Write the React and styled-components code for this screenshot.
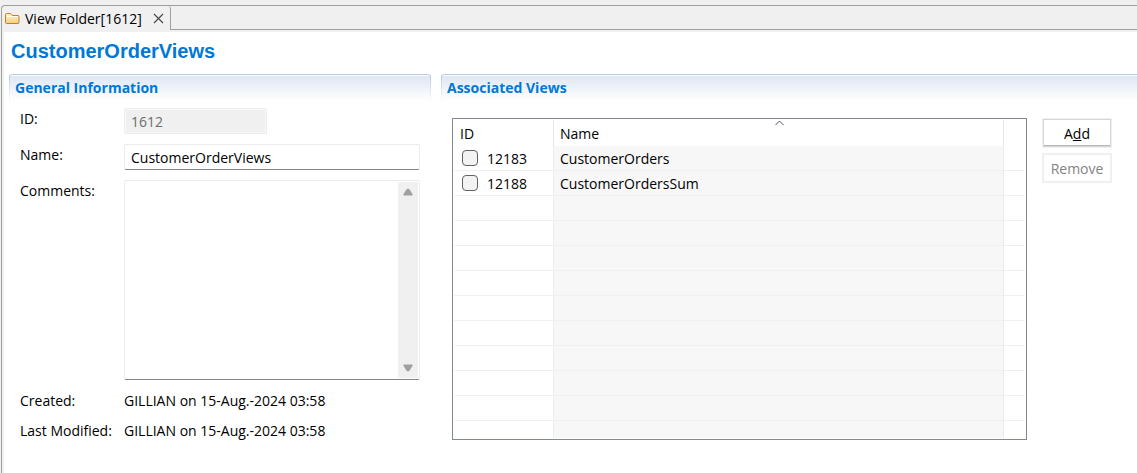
import React from "react";
import styled, { createGlobalStyle } from "styled-components";

const GlobalStyle = createGlobalStyle`
  * { box-sizing: border-box; }
  body {
    margin: 0;
    background: #f0f0f0;
    color: #000;
    font-family: "Open Sans", "Noto Sans", sans-serif;
    font-size: 14px;
    line-height: 20px;
  }
  input, textarea, button { font: inherit; color: inherit; }
`;

const Editor = styled.div`
  display: flex;
  flex-direction: column;
  min-height: 100vh;
  padding: 5px 0 0 1px;
`;

const Frame = styled.div`
  flex: 1;
  display: flex;
  flex-direction: column;
  border: solid #a0a0a0;
  border-width: 1px 0 0 1px;
  border-top-left-radius: 4px;
`;

const TabBar = styled.div`
  display: flex;
  height: 24px;
`;

const Tab = styled.div`
  display: flex;
  align-items: center;
  width: 169px;
  padding-left: 3px;
  border-right: 1px solid #a0a0a0;
  border-top-right-radius: 3px;
  white-space: nowrap;
`;

const TabLabel = styled.span`
  flex: 1;
  padding: 2px 0 0 5px;
`;

const TabFill = styled.div`
  flex: 1;
  border-bottom: 1px solid #a0a0a0;
`;

const CloseButton = styled.button`
  display: flex;
  padding: 0;
  margin-right: 6px;
  border: 0;
  background: none;
`;

const Page = styled.main`
  flex: 1;
  margin: 2px 0 0 2px;
  padding: 6px 0 16px 5px;
  background: #fff;
`;

const Title = styled.h1`
  margin: 0;
  padding-left: 2px;
  color: #0078d7;
  font: bold 20px/26px "Liberation Sans", Arial, sans-serif;
`;

const Columns = styled.div`
  display: grid;
  grid-template-columns: minmax(0, 422fr) minmax(0, 696fr);
  column-gap: 10px;
  padding-top: 10px;
`;

const SectionHeader = styled.h2`
  position: relative;
  margin: 0;
  height: 28px;
  padding: 3px 6px;
  border-top: 1px solid #b4c8e0;
  border-radius: ${(p) => (p.$open ? "4px 0 0 0" : "4px 4px 0 0")};
  background: linear-gradient(#fff 0 1px, #e0e7f2 1px, #fff 26px);
  color: #0078d7;
  font-size: 14px;
  font-weight: bold;
  line-height: 19px;

  &::after {
    content: "";
    position: absolute;
    inset: 0;
    border: solid transparent;
    border-width: 0 1px;
    border-image: linear-gradient(#b4c8e0, #fff) 1;
    border-right-width: ${(p) => (p.$open ? 0 : "1px")};
    border-top-width: 0;
    border-bottom-width: 0;
  }
`;

const Form = styled.form`
  display: grid;
  grid-template-columns: 104px minmax(0, 1fr);
  row-gap: 10px;
  padding: 6px 11px 0 11px;
`;

const Label = styled.label`
  height: 22px;
  padding-top: 1px;
  white-space: nowrap;
`;

const TextField = styled.input`
  width: ${(p) => (p.$short ? "143px" : "100%")};
  height: 26px;
  padding: 1px 6px;
  border: 1px solid #ececec;
  border-bottom-color: #868686;
  border-radius: 2px;
  background: #fff;
  outline: 0;

  &:disabled {
    border-color: #ececec;
    background: #f0f0f0;
    box-shadow: inset 0 0 0 1px #f9f9f9;
    color: #6d6d6d;
  }
`;

const CommentBox = styled.div`
  display: flex;
  height: 200px;
  padding: 1px;
  border: 1px solid #ececec;
  border-bottom-color: #868686;
  border-radius: 2px;
`;

const CommentArea = styled.textarea`
  flex: 1;
  min-width: 0;
  padding: 2px 5px;
  border: 0;
  outline: 0;
  resize: none;
  overflow: hidden;
  background: #fff;
`;

const ScrollTrack = styled.div`
  display: flex;
  flex-direction: column;
  justify-content: space-between;
  align-items: center;
  width: 20px;
  padding: 6px 0;
  background: #f0f0f0;
`;

const Details = styled.dl`
  display: grid;
  grid-template-columns: 104px minmax(0, 1fr);
  row-gap: 10px;
  margin: 0;
  padding: 11px 0 0 11px;
  white-space: nowrap;

  dt, dd { margin: 0; }
`;

const ViewsBody = styled.div`
  display: flex;
  align-items: flex-start;
  gap: 15px;
  padding: 16px 25px 0 11px;
`;

const TableBox = styled.div`
  flex: 1;
  min-width: 0;
  height: 322px;
  padding: 1px;
  border: 1px solid #828790;
  overflow: hidden;
`;

const TableClip = styled.div`
  height: 100%;
  overflow: hidden;
`;

const Table = styled.table`
  width: 100%;
  table-layout: fixed;
  border-collapse: separate;
  border-spacing: 0;
`;

const HeadCell = styled.th`
  position: relative;
  width: ${(p) => p.$width || "auto"};
  height: 26px;
  padding: 2px 6px 0;
  border-right: ${(p) => (p.$last ? "0" : "1px solid #e5e5e5")};
  font-weight: normal;
  text-align: left;
`;

const SortMark = styled.svg`
  position: absolute;
  top: 0;
  left: calc(50% - 4px);
`;

const Cell = styled.td`
  height: 25px;
  padding: 2px 6px 0;
  border-bottom: 1px solid #f0f0f0;
  border-right: ${(p) => (p.$last ? "0" : "1px solid #e8edf4")};
  background: ${(p) => (p.$sorted ? "#f7f7f7" : "#fff")};
`;

const CheckLabel = styled.label`
  display: flex;
  align-items: center;
  gap: 9px;
  padding-left: 2px;
`;

const CheckBox = styled.input`
  appearance: none;
  width: 16px;
  height: 16px;
  margin: 0 0 2px;
  border: 1px solid #626262;
  border-radius: 4px;
  background: #f3f3f3;
`;

const Actions = styled.div`
  display: flex;
  flex-direction: column;
  gap: 5px;
  width: 70px;
`;

const ActionButton = styled.button`
  height: 30px;
  padding: 1px 0 0;
  border: 1px solid #f0f0f0;
  background: #fff;
  box-shadow: inset 0 0 0 1px #d6d6d6, inset 0 -2px 0 #b8b8b8;

  &:disabled {
    color: #838383;
    box-shadow: inset 0 0 0 1px #f0f0f0;
  }
`;

const FolderIcon = () => (
  <svg width="15" height="13" viewBox="0 0 15 13" aria-hidden="true">
    <defs>
      <linearGradient id="folder" x1="0" y1="0" x2="0" y2="1">
        <stop offset="0" stopColor="#fff3cf" />
        <stop offset="1" stopColor="#f5cf7c" />
      </linearGradient>
    </defs>
    <path
      d="M.5 10.5v-8q0-1 1-1h3.500q1 0 1.500 1t1.500 1h5q1 0 1 1v6q0 1-1 1h-11.500q-1 0-1-1z"
      fill="url(#folder)"
      stroke="#c08030"
    />
    <path d="M1.500 4.500h11.500" stroke="#fffbe8" />
  </svg>
);

const Arrow = ({ down }) => (
  <svg width="10" height="8" viewBox="0 0 10 8" aria-hidden="true">
    <path
      d={down ? "M1 .5h8q1 .3.500 1.200l-3 5q-1.500 1.300-3 0l-3-5q-.5-.9.500-1.200z" : "M1 7.500h8q1-.3.500-1.200l-3-5q-1.500-1.300-3 0l-3 5q-.5.9.500 1.200z"}
      fill="#a0a0a0"
    />
  </svg>
);

const views = [
  { id: "12183", name: "CustomerOrders" },
  { id: "12188", name: "CustomerOrdersSum" },
];
const emptyRows = Array.from({ length: 10 }, (_, i) => i);

export default function App() {
  return (
    <>
      <GlobalStyle />
      <Editor>
        <Frame>
          <TabBar>
            <Tab>
              <FolderIcon />
              <TabLabel>View Folder[1612]</TabLabel>
              <CloseButton type="button" aria-label="Close">
                <svg width="11" height="11" viewBox="0 0 11 11">
                  <path d="M1 1l9 9M10 1l-9 9" stroke="#444" strokeWidth="1.100" />
                </svg>
              </CloseButton>
            </Tab>
            <TabFill />
          </TabBar>
          <Page>
            <Title>CustomerOrderViews</Title>
            <Columns>
              <section>
                <SectionHeader>General Information</SectionHeader>
                <Form>
                  <Label htmlFor="view-id">ID:</Label>
                  <TextField id="view-id" $short disabled defaultValue="1612" />
                  <Label htmlFor="view-name">Name:</Label>
                  <TextField id="view-name" defaultValue="CustomerOrderViews" />
                  <Label htmlFor="view-comments">Comments:</Label>
                  <CommentBox>
                    <CommentArea id="view-comments" />
                    <ScrollTrack>
                      <Arrow />
                      <Arrow down />
                    </ScrollTrack>
                  </CommentBox>
                </Form>
                <Details>
                  <dt>Created:</dt>
                  <dd>GILLIAN on 15-Aug.-2024 03:58</dd>
                  <dt>Last Modified:</dt>
                  <dd>GILLIAN on 15-Aug.-2024 03:58</dd>
                </Details>
              </section>
              <section>
                <SectionHeader $open>Associated Views</SectionHeader>
                <ViewsBody>
                  <TableBox>
                    <TableClip>
                      <Table>
                        <thead>
                          <tr>
                            <HeadCell $width="100px">ID</HeadCell>
                            <HeadCell>
                              Name
                              <SortMark width="9" height="6" viewBox="0 0 9 6">
                                <path d="M.5 5l4-4 4 4" fill="none" stroke="#555" />
                              </SortMark>
                            </HeadCell>
                            <HeadCell $width="21px" $last />
                          </tr>
                        </thead>
                        <tbody>
                          {views.map((view) => (
                            <tr key={view.id}>
                              <Cell>
                                <CheckLabel>
                                  <CheckBox type="checkbox" />
                                  {view.id}
                                </CheckLabel>
                              </Cell>
                              <Cell $sorted>{view.name}</Cell>
                              <Cell $last />
                            </tr>
                          ))}
                          {emptyRows.map((row) => (
                            <tr key={row}>
                              <Cell />
                              <Cell $sorted />
                              <Cell $last />
                            </tr>
                          ))}
                        </tbody>
                      </Table>
                    </TableClip>
                  </TableBox>
                  <Actions>
                    <ActionButton type="button">
                      A<u>d</u>d
                    </ActionButton>
                    <ActionButton type="button" disabled>
                      Remove
                    </ActionButton>
                  </Actions>
                </ViewsBody>
              </section>
            </Columns>
          </Page>
        </Frame>
      </Editor>
    </>
  );
}
